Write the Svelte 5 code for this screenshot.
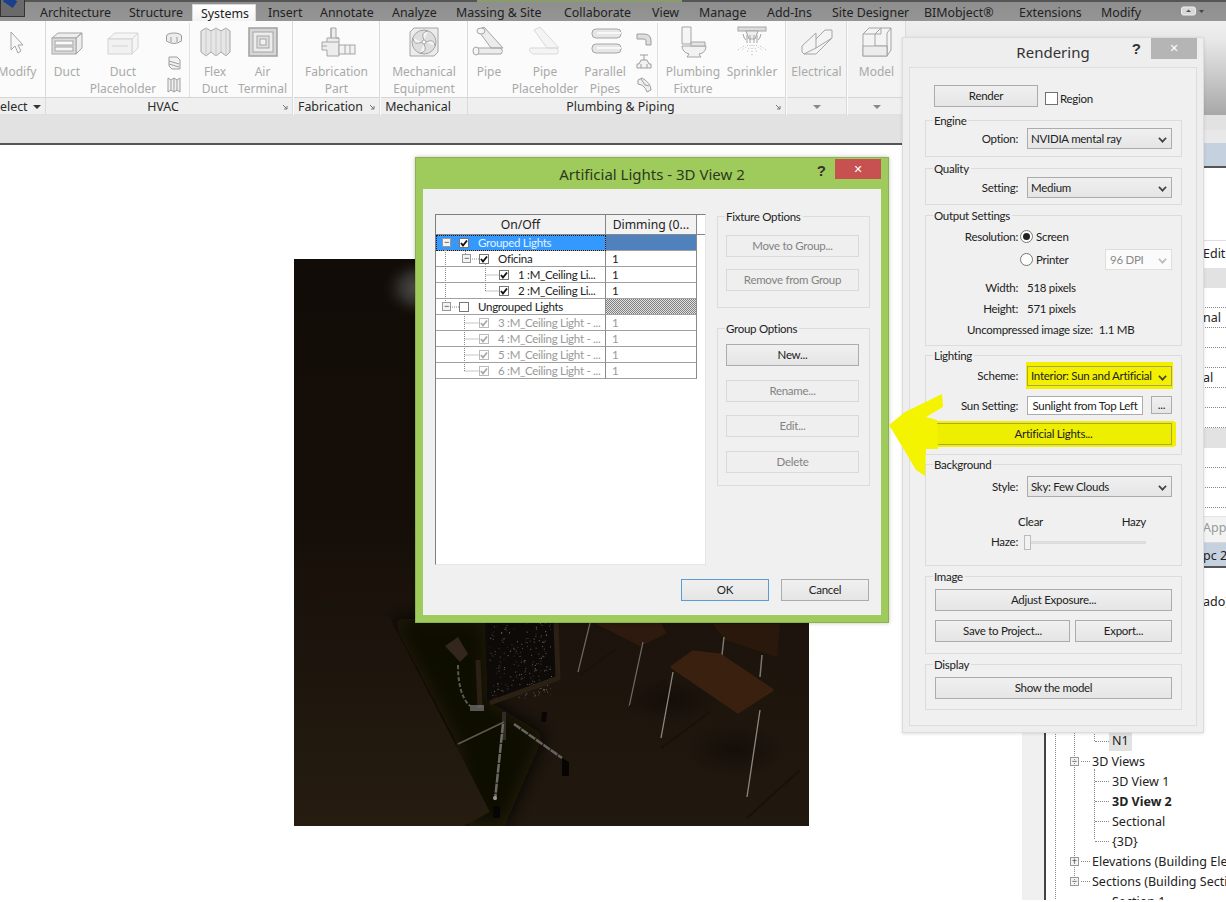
<script>
  const tabs = [
    ['Architecture', 89], ['Structure', 63], ['Systems', 76, true], ['Insert', 52], ['Annotate', 72], ['Analyze', 64],
    ['Massing & Site', 108], ['Collaborate', 88], ['View', 47], ['Manage', 68], ['Add-Ins', 65], ['Site Designer', 92],
    ['BIMobject®', 95], ['Extensions', 82], ['Modify', 72]
  ];
  const panels = [
    { title: 'elect', w: 45, drop: true, tools: [{ w: 34, l: ['Modify'], i: 'arrow' }] },
    { title: 'HVAC', w: 246, launch: true, tools: [
      { w: 42, l: ['Duct'], i: 'duct' }, { w: 70, l: ['Duct', 'Placeholder'], i: 'ductp' },
      { w: 32, small: ['fit', 'acc', 'flexs'], sep: true }, { w: 50, l: ['Flex', 'Duct'], i: 'flex' }, { w: 45, l: ['Air', 'Terminal'], i: 'air' } ] },
    { title: 'Fabrication', w: 85, launch: true, tools: [{ w: 85, l: ['Fabrication', 'Part'], i: 'fab' }] },
    { title: 'Mechanical', w: 86, tools: [{ w: 86, l: ['Mechanical', 'Equipment'], i: 'fan' }] },
    { title: 'Plumbing & Piping', w: 317, launch: true, tools: [
      { w: 42, l: ['Pipe'], i: 'pipe' }, { w: 70, l: ['Pipe', 'Placeholder'], i: 'pipep' }, { w: 50, l: ['Parallel', 'Pipes'], i: 'par' },
      { w: 28, small: ['elbow', 'valve', 'bend'], sep: true }, { w: 70, l: ['Plumbing', 'Fixture'], i: 'toilet' }, { w: 48, l: ['Sprinkler'], i: 'spr' } ] },
    { title: '', w: 59, arrow: true, tools: [{ w: 59, l: ['Electrical'], i: 'tray' }] },
    { title: '', w: 57, arrow: true, tools: [{ w: 57, l: ['Model'], i: 'cube' }] }
  ];
  const rows = [
    { lv: 0, exp: true, cb: 'on', t: 'Grouped Lights', v: '', kind: 'picked' },
    { lv: 1, exp: true, cb: 'on', t: 'Oficina', v: '1' },
    { lv: 2, cb: 'on', t: '1 :M_Ceiling Li...', v: '1' },
    { lv: 2, cb: 'on', t: '2 :M_Ceiling Li...', v: '1' },
    { lv: 0, exp: true, cb: 'off', t: 'Ungrouped Lights', v: '', kind: 'hatch' },
    { lv: 3, cb: 'dis', t: '3 :M_Ceiling Light - ...', v: '1', kind: 'dis' },
    { lv: 3, cb: 'dis', t: '4 :M_Ceiling Light - ...', v: '1', kind: 'dis' },
    { lv: 3, cb: 'dis', t: '5 :M_Ceiling Light - ...', v: '1', kind: 'dis' },
    { lv: 3, cb: 'dis', t: '6 :M_Ceiling Light - ...', v: '1', kind: 'dis' }
  ];
  const palette = [
    ['', 'pr-h26'], ['Edit', 'pr-edit'], ['', 'pr-gray'], ['', 'pr'], ['nal', 'pr'], ['', 'pr'], ['', 'pr'], ['al', 'pr'], ['', 'pr'], ['', 'pr'],
    ['', 'pr-gray'], ['', 'pr'], ['', 'pr'], ['', 'pr']
  ];
  let seed = 7;
  const rnd = () => (seed = (seed * 16807) % 2147483647) / 2147483647;
  const specks = Array.from({ length: 230 }, () => {
    const y = 623 + rnd() * 75;
    const x = 488 + (y - 623) * 0.04 + rnd() * 62;
    return { x, y, o: 0.2 + rnd() * 0.6 };
  });
</script>

{#snippet check(color)}
  <svg class="tick" viewBox="0 0 10 10"><path d="M2 5 L4 7.5 L8 2.5" fill="none" stroke={color} stroke-width="1.9" /></svg>
{/snippet}

{#snippet ribbonIcon(name)}
  <svg class="ric" viewBox="0 0 32 32" fill="#eeeeee" stroke="#a5a5a5" stroke-width="1">
    {#if name === 'arrow'}
      <path d="M10 6 V24 L14 20 L17 27 L20 25 L17 19 L22 19 Z" fill="#f8f8f8" />
    {:else if name === 'duct'}
      <path d="M1 12 L7 7 H31 L25 12 Z M25 12 L31 7 V22 L25 28 Z" /><rect x="1" y="12" width="24" height="16" fill="#dcdcdc" /><rect x="4" y="15" width="18" height="4" fill="#fafafa" /><rect x="4" y="21" width="18" height="4" fill="#f5f5f5" />
    {:else if name === 'ductp'}
      <g opacity=".45"><path d="M1 13 L8 7 H31 L25 13 Z M25 13 L31 7 V22 L25 28 Z" /><rect x="1" y="13" width="24" height="15" fill="#e5e5e5" /><path d="M5 20 H21" /></g>
    {:else if name === 'flex'}
      <path d="M2 5 L7 2 L12 5 L17 2 L22 5 L27 2 L31 5 V26 L27 30 L22 26 L17 30 L12 26 L7 30 L2 26 Z" fill="#e6e6e6" /><path d="M7 2 V30 M12 5 V26 M17 2 V30 M22 5 V26 M27 2 V30" stroke="#c8c8c8" />
    {:else if name === 'air'}
      <rect x="2" y="2" width="28" height="28" fill="#d6d6d6" stroke="#a0a0a0" stroke-width="1.5" /><rect x="6" y="6" width="20" height="20" fill="#ececec" /><rect x="10" y="10" width="12" height="12" fill="#dedede" /><rect x="13" y="13" width="6" height="6" fill="#f2f2f2" />
    {:else if name === 'fab'}
      <path d="M10 2 H15 V12 H18 V30 H6 V24 H1 V16 H6 V12 H10 Z" fill="#ededed" /><path d="M6 16 H18 M10 12 H18 M10 2 V12" /><rect x="18" y="19" width="16" height="9" fill="#f2f2f2" /><path d="M24 19 V28 M29 19 V28 M1 20 H6" />
    {:else if name === 'fan'}
      <path d="M2 6 L6 2 H30 V26 L26 30 H2 Z" fill="#ececec" /><circle cx="16" cy="16" r="12" fill="#dedede" /><circle cx="16" cy="16" r="2" fill="#fff" /><path d="M16 14 Q12 6 20 5 M18 16 Q26 12 27 20 M16 18 Q20 26 12 27 M14 16 Q6 20 5 12" fill="#f4f4f4" />
    {:else if name === 'pipe'}
      <path d="M1 22 H28 Q31 26 28 28 H4 Q-1 25 1 22 Z M5 4 L11 1 L30 22 H18 Z" fill="#ececec" /><ellipse cx="8" cy="5" rx="4" ry="3" fill="#f5f5f5" /><ellipse cx="3" cy="25" rx="3" ry="4" fill="#f5f5f5" />
    {:else if name === 'pipep'}
      <g opacity=".4"><path d="M1 22 H28 Q31 26 28 28 H4 Q-1 25 1 22 Z M5 4 L11 1 L30 22 H18 Z" fill="#ececec" /></g>
    {:else if name === 'par'}
      <rect x="3" y="3" width="29" height="9" rx="4" fill="#e6e6e6" /><rect x="3" y="18" width="29" height="9" rx="4" fill="#e6e6e6" /><path d="M8 7 H32 M8 22 H32" stroke="#f8f8f8" stroke-width="2" />
    {:else if name === 'toilet'}
      <path d="M5 1 H14 V18 H5 Z" fill="#f5f5f5" /><path d="M5 20 H29 Q29 27 22 28 L24 31 H10 L12 28 Q5 26 5 20 Z" fill="#f2f2f2" /><path d="M14 16 H28 V20 H14 Z" fill="#e4e4e4" />
    {:else if name === 'spr'}
      <rect x="2" y="1" width="28" height="4" fill="#dcdcdc" /><path d="M10 5 H22 L19 13 H13 Z" fill="#eee" /><path d="M11 9 V17 M14 9 V17 M18 9 V17 M21 9 V17 M7 8 Q8 13 10 14 M25 8 Q24 13 22 14" /><g stroke="#b5b5b5" stroke-dasharray="1 2"><path d="M12 19 L5 25 M14 19 L11 27 M18 19 L21 27 M20 19 L27 25 M8 20 L2 24 M24 20 L30 24 M16 19 V29" /></g>
    {:else if name === 'tray'}
      <path d="M1 20 L15 7 V13 L24 4 H31 V12 L15 28 H3 L1 26 Z" fill="#f4f4f4" /><path d="M15 13 V22 L31 12 M15 22 L3 28" fill="none" />
    {:else if name === 'cube'}
      <path d="M2 8 L8 2 H30 V24 L26 30 H2 Z" fill="#f4f4f4" /><path d="M2 8 H14 L20 2 M14 8 V20 H26 V30 M26 30 V7 L30 2 M20 2 V8 H14" fill="none" /><rect x="2" y="20" width="24" height="10" fill="#ececec" />
    {/if}
  </svg>
{/snippet}

{#snippet smallIcon(name)}
  <svg class="ris" viewBox="0 0 16 16" fill="#ececec" stroke="#9d9d9d" stroke-width="1">
    {#if name === 'fit'}
      <ellipse cx="8" cy="5" rx="7.5" ry="3" /><path d="M.5 5 V10 Q8 15 15.5 10 V5" /><path d="M5 6 V11 M11 6 V11" />
    {:else if name === 'acc'}
      <path d="M3 3 H11 L14 6 V15 H6 L3 12 Z" fill="#f2f2f2" /><path d="M3 7 L13 10 M3 10 L13 13" />
    {:else if name === 'flexs'}
      <path d="M2 1 L5 3 L8 1 L11 3 L14 1 V15 L11 13 L8 15 L5 13 L2 15 Z" fill="#f2f2f2" /><path d="M5 3 V13 M8 1 V15 M11 3 V13" />
    {:else if name === 'elbow'}
      <path d="M1 3 H8 Q15 3 15 10 V14 H10 V10 Q10 8 8 8 H1 Z" fill="#dedede" />
    {:else if name === 'valve'}
      <path d="M4 1 H12 M8 1 V6 M5 6 H11 L13 10 H15 V14 H1 V10 H3 Z" fill="#f2f2f2" /><path d="M5 10 V14 M11 10 V14" />
    {:else if name === 'bend'}
      <path d="M2 3 L6 1 Q15 6 15 13 L11 15 Q9 8 2 7 Z" fill="#f0f0f0" /><path d="M5 2 L9 8 L13 9" />
    {/if}
  </svg>
{/snippet}

<div class="desk">
  <!-- Revit ribbon -->
  <header class="top">
    <div class="tabbar">
      <i class="qat"></i>
      <div class="appbtn"><span class="applogo"></span></div>
      {#each tabs as t}
        <div class="tab" class:active={t[2]} style="width:{t[1]}px"><span>{t[0]}</span></div>
      {/each}
      <svg class="mini" viewBox="0 0 24 10"><rect x=".5" y="1" width="14" height="8" rx="2" fill="#d8d8d8" stroke="#eee" /><path d="M5 6 L7.5 3.5 L10 6 Z" fill="#555" /><path d="M18 4 H23 L20.5 7 Z" fill="#444" /></svg>
    </div>
    <div class="ribbon">
      {#each panels as p}
        <section class="panel" style="width:{p.w}px">
          <div class="tools">
            {#each p.tools as t}
              {#if t.small}
                <div class="smalls" class:sep={t.sep} style="width:{t.w}px">
                  {#each t.small as s}{@render smallIcon(s)}{/each}
                </div>
              {:else}
                <div class="tool" style="width:{t.w}px">
                  <div class="icbox">{@render ribbonIcon(t.i)}</div>
                  {#each t.l as line}<span class="tl">{line}</span>{/each}
                </div>
              {/if}
            {/each}
          </div>
          <div class="ptitle" class:left={p.drop} class:named={p.title && !p.drop}>
            {#if p.title}<span>{p.title}</span>{/if}
            {#if p.drop}<i class="dtri dark"></i>{/if}
            {#if p.arrow}<i class="dtri"></i>{/if}
            {#if p.launch}<svg class="launch" viewBox="0 0 7 7"><path d="M1 1 L5 5 M5 2 V5 H2" fill="none" stroke="#777" /></svg>{/if}
          </div>
        </section>
      {/each}
      <div class="ribbon-rest"></div>
    </div>
    <div class="subbar"></div>
  </header>

  <!-- Rendered view -->
  <svg class="scene" viewBox="294 259 515 567" aria-hidden="true">
    <defs>
      <linearGradient id="bg" x1="0" y1="0" x2="0" y2="1">
        <stop offset="0" stop-color="#120c08" /><stop offset=".45" stop-color="#150e08" /><stop offset=".65" stop-color="#1c140c" /><stop offset="1" stop-color="#21190f" />
      </linearGradient>
      <linearGradient id="table" x1="0" y1="0" x2="0" y2="1">
        <stop offset="0" stop-color="#19120b" /><stop offset="1" stop-color="#261c10" />
      </linearGradient>
      <radialGradient id="glare"><stop offset="0" stop-color="#5e5d59" /><stop offset=".55" stop-color="#363431" stop-opacity=".8" /><stop offset="1" stop-color="#1a1410" stop-opacity="0" /></radialGradient>
      <radialGradient id="shade"><stop offset="0" stop-color="#0b0705" stop-opacity=".55" /><stop offset="1" stop-color="#0b0705" stop-opacity="0" /></radialGradient>
      <filter id="soft" x="-30%" y="-30%" width="160%" height="160%"><feGaussianBlur stdDeviation="9" /></filter>
    </defs>
    <rect x="294" y="259" width="515" height="567" fill="url(#bg)" />
    <ellipse cx="422" cy="288" rx="40" ry="30" fill="url(#glare)" />
    <path d="M390 618 L485 620 L488 700 L545 735 L525 780 L505 826 L470 826 L455 740 Z" fill="#0a0705" filter="url(#soft)" />
    <path d="M294 590 L390 618 L490 812 L463 826 H294 Z" fill="url(#table)" />
    <ellipse cx="670" cy="700" rx="50" ry="24" fill="url(#shade)" />
    <ellipse cx="735" cy="750" rx="50" ry="26" fill="url(#shade)" />
    <path d="M487 623 H555 L556 678 Q520 695 487 702 Z" fill="#0d0a08" />
    {#each specks as s}
      <rect x={s.x} y={s.y} width="1" height="1" fill="#8b8b88" opacity={s.o} />
    {/each}
    <path d="M478 660 L480 708 M556 623 L558 678 L490 703" stroke="#2a2013" stroke-width="5" fill="none" />
    <path d="M445 646 L458 637 L468 654 L460 662 Z" fill="#33261a" />
    <path d="M458 665 Q458 695 470 706" stroke="#5b5954" stroke-width="2" fill="none" stroke-dasharray="4 2" />
    <rect x="470" y="705" width="14" height="6" fill="#888" opacity=".6" />
    <path d="M504 712 V740" stroke="#2f2b26" stroke-width="4" />
    <path d="M504 722 L458 744" stroke="#5d5a55" stroke-width="1.5" />
    <path d="M514 724 L562 758" stroke="#66635e" stroke-width="2.5" stroke-dasharray="8 1" />
    <path d="M503 724 L495 800" stroke="#6c6a64" stroke-width="2.5" stroke-dasharray="9 1" />
    <circle cx="495" cy="798" r="2" fill="#999" />
    <path d="M562 758 V776 H569 V762 Z" fill="#070504" />
    <path d="M493 806 H500 V818 H493 Z" fill="#080605" />
    <path d="M542 712 H547 L546 722 H541 Z" fill="#090605" />
    <path d="M597 623 H660 L665 633 L640 645 Z" fill="#2e1a0e" stroke="#2e1a0e" stroke-width="2" stroke-linejoin="round" />
    <path d="M590 623 L578 672 M643 642 L629 707" stroke="#6c6962" stroke-width="1.2" fill="none" />
    <path d="M629 707 L665 680 M580 675 L615 650" stroke="#1a110b" stroke-width="2" />
    <path d="M713 624 H780 L777 657 L725 640 Z" fill="#2b180d" />
    <path d="M724 637 L722 655 M762 655 L760 677" stroke="#7a7770" stroke-width="1.5" />
    <path d="M672 667 L693 652 L720 655 L772 690 L738 712 Z" fill="#39200f" stroke="#39200f" stroke-width="3" stroke-linejoin="round" />
    <path d="M673 672 L661 738 M760 710 L747 797" stroke="#8a8780" stroke-width="1.3" />
    <path d="M661 748 L710 712 M747 818 L800 770" stroke="#19110b" stroke-width="2" />
  </svg>

  <!-- Properties palette and project browser behind the Rendering dialog -->
  <aside class="side">
    <div class="side-top"></div>
    <div class="side-head"></div>
    {#each palette as p}
      <div class={p[1]}><span>{p[0]}</span></div>
    {/each}
    <div class="pr-app"><span>App</span></div>
    <div class="pr-blue"><span>pc 2</span></div>
    <div class="browser">
      <div class="gutter"></div>
      <div class="tree">
        <div class="b-row ado"><span>ado)</span></div>
        <div class="b-list">
          <i class="vdot v1"></i><i class="vdot v2"></i><i class="vdot v3"></i><i class="vdot v4"></i>
          <div class="b-row l2"><i class="hd"></i><span class="cur">N1</span></div>
          <div class="b-row l1"><b class="expander">−</b><i class="hd sm"></i><span>3D Views</span></div>
          <div class="b-row l2"><i class="hd"></i><span>3D View 1</span></div>
          <div class="b-row l2"><i class="hd"></i><strong>3D View 2</strong></div>
          <div class="b-row l2"><i class="hd"></i><span>Sectional</span></div>
          <div class="b-row l2"><i class="hd"></i><span>{'{3D}'}</span></div>
          <div class="b-row l1"><b class="expander">+</b><i class="hd sm"></i><span>Elevations (Building Elevation)</span></div>
          <div class="b-row l1"><b class="expander">−</b><i class="hd sm"></i><span>Sections (Building Section)</span></div>
          <div class="b-row l2"><i class="hd"></i><span>Section 1</span></div>
        </div>
      </div>
    </div>
  </aside>

  <!-- Artificial Lights dialog -->
  <div class="win lights">
    <div class="caption">
      <span class="ctitle">Artificial Lights - 3D View 2</span>
      <span class="help">?</span>
      <span class="close red">✕</span>
    </div>
    <div class="client">
      <div class="lmain">
        <div class="list">
          <div class="lrow lhead"><div class="c1 hc">On/Off</div><div class="c2 hc">Dimming (0...</div><div class="c3"></div></div>
          {#each rows as r}
            <div class="lrow {r.kind ?? ''}">
              <div class="c1 lv{r.lv}">
                {#if r.exp}<b class="exp">−</b>{/if}
                <span class="cb {r.cb}">{#if r.cb === 'on'}{@render check('#111')}{:else if r.cb === 'dis'}{@render check('#a9a9a9')}{/if}</span>
                <span class="lt">{r.t}</span>
              </div>
              <div class="c2">{r.v}</div>
            </div>
          {/each}
          <svg class="treelines" viewBox="0 0 271 351" aria-hidden="true">
            <g stroke="#8a8a8a" stroke-dasharray="1 1" fill="none">
              <path d="M10.5 34 V88 M15 29 H24 M15 93 H24" />
              <path d="M30.5 37 V40 M35 45 H44" />
              <path d="M50.5 50 V77 M50.5 61 H64 M50.5 77 H64" />
              <path d="M29.5 100 V157 M29.5 109 H44 M29.5 125 H44 M29.5 141 H44 M29.5 157 H44" />
            </g>
          </svg>
        </div>
        <div class="opts">
          <div class="grp gf">
            <span class="leg">Fixture Options</span>
            <button class="btn dis">Move to Group...</button>
            <button class="btn dis">Remove from Group</button>
          </div>
          <div class="grp gg">
            <span class="leg">Group Options</span>
            <button class="btn">New...</button>
            <button class="btn dis">Rename...</button>
            <button class="btn dis">Edit...</button>
            <button class="btn dis">Delete</button>
          </div>
        </div>
      </div>
      <div class="lfoot">
        <button class="btn ok">OK</button>
        <button class="btn ok cancel">Cancel</button>
      </div>
    </div>
  </div>

  <!-- Rendering dialog -->
  <div class="win rendering">
    <div class="caption">
      <span class="ctitle">Rendering</span>
      <span class="help">?</span>
      <span class="close gray">✕</span>
    </div>
    <div class="rclient">
      <div class="rtop">
        <button class="btn render">Render</button>
        <span class="cb big"></span><span class="reg">Region</span>
      </div>

      <div class="g g-engine">
        <span class="leg">Engine</span>
        <div class="f"><label>Option:</label><div class="sel">NVIDIA mental ray<i class="chev"></i></div></div>
      </div>
      <div class="g g-quality">
        <span class="leg">Quality</span>
        <div class="f"><label>Setting:</label><div class="sel">Medium<i class="chev"></i></div></div>
      </div>
      <div class="g g-output">
        <span class="leg">Output Settings</span>
        <div class="f"><label>Resolution:</label><div class="rad"><i class="radio on"></i>Screen</div></div>
        <div class="f"><label></label><div class="rad"><i class="radio"></i>Printer<div class="sel dpi">96 DPI<i class="chev pale"></i></div></div></div>
        <div class="f gapf"><label>Width:</label><span>518 pixels</span></div>
        <div class="f"><label>Height:</label><span>571 pixels</span></div>
        <div class="unc"><span>Uncompressed image size:</span><span>1.1 MB</span></div>
      </div>
      <div class="g g-light">
        <span class="leg">Lighting</span>
        <div class="f h20"><label>Scheme:</label><div class="sel hl">Interior: Sun and Artificial<i class="chev"></i></div></div>
        <div class="f sun"><label>Sun Setting:</label><div class="sunv"><span class="sunbox">Sunlight from Top Left</span><button class="btn dots">...</button></div></div>
        <button class="btn wide hlb">Artificial Lights...</button>
      </div>
      <div class="g g-back">
        <span class="leg">Background</span>
        <div class="f"><label>Style:</label><div class="sel">Sky: Few Clouds<i class="chev"></i></div></div>
        <div class="f cl"><label></label><div class="clhz"><span>Clear</span><span>Hazy</span></div></div>
        <div class="f hz"><label>Haze:</label><div class="slider"><i class="thumb"></i></div></div>
      </div>
      <div class="g g-image">
        <span class="leg">Image</span>
        <button class="btn wide">Adjust Exposure...</button>
        <div class="two"><button class="btn">Save to Project...</button><button class="btn">Export...</button></div>
      </div>
      <div class="g g-display">
        <span class="leg">Display</span>
        <button class="btn wide">Show the model</button>
      </div>
    </div>
  </div>

  <svg class="marker" viewBox="885 388 60 95" aria-hidden="true">
    <path d="M889 425 L905 412 L942 394 L943 407 L926 417 L937 420 L938 449 L926 449 L925 476 L916 470 L906 453 Z" fill="#f4f400" />
  </svg>
</div>

<style>
  :global(body) { margin: 0; background: #fff; }
  .desk { position: relative; width: 1226px; height: 902px; overflow: hidden; background: #fff; font: 11.5px/1.2 Lato, "Liberation Sans", sans-serif; letter-spacing: -.28px; color: #222; }
  button { font: inherit; letter-spacing: inherit; color: inherit; padding: 0; }

  .top { display: flex; flex-direction: column; height: 145px; font-family: "Noto Sans", sans-serif; letter-spacing: 0; }
  .tabbar { position: relative; display: flex; align-items: stretch; height: 21px; background: linear-gradient(#555 0 2px, #8e8e8e 2px, #959595); font-size: 12.4px; }
  .qat { position: absolute; left: 477px; top: 0; width: 205px; height: 2px; background: #8b9c6b; }
  .appbtn { width: 25px; height: 17px; margin-right: 15px; background: #6a6a6a; border: 1px solid #333; border-top: 0; box-sizing: border-box; overflow: hidden; }
  .applogo { display: block; width: 12px; height: 8px; background: #1c3f8c; transform: rotate(35deg) translate(1px, -4px); }
  .tab { padding-top: 6px; box-sizing: border-box; white-space: nowrap; color: #222; }
  .tab.active { background: linear-gradient(#fff, #f3f3f3); border: 1px solid #d8d8d8; border-bottom: 0; height: 17px; margin-top: 4px; padding: 2px 0 0 8px; width: 64px !important; margin-right: 12px; }
  .mini { width: 24px; height: 10px; margin: 6px 0 0 8px; }
  .ribbon { display: flex; height: 94px; background: #fbfbfb; }
  .panel { flex: none; display: flex; flex-direction: column; margin-right: 1px; box-shadow: 1px 0 0 #dadada; }
  .panel:nth-child(2), .panel:nth-child(3) { margin-right: 2px; }
  .panel:nth-child(5) { margin-right: 2px; }
  .panel:nth-child(6) { margin-right: 2px; background: #f3f3f3; }
  .panel:nth-child(7) { background: #f3f3f3; }
  .tools { display: flex; height: 76px; }
  .tool { flex: none; display: flex; flex-direction: column; align-items: center; padding-top: 5px; box-sizing: border-box; color: #a9a9a9; white-space: nowrap; font-size: 12px; line-height: 17px; }
  .icbox { height: 34px; margin-bottom: 3px; display: flex; justify-content: center; }
  .tl { display: block; }
  .ric { width: 32px; height: 32px; overflow: visible; }
  .smalls { flex: none; display: flex; flex-direction: column; align-items: center; gap: 7px; padding-top: 8px; box-sizing: border-box; height: 74px; border-right: 1px solid #e0e0e0; margin-top: 2px; }
  .ris { width: 16px; height: 16px; }
  .ptitle { position: relative; height: 18px; padding-top: 2px; background: #efefef; border-top: 1px solid #d5d5d5; border-bottom: 1px solid #e0e0e0; box-sizing: border-box; text-align: center; font-size: 12.4px; line-height: 16px; color: #2b2b2b; display: flex; justify-content: center; align-items: center; white-space: nowrap; }
  .ptitle.named { padding-right: 12px; }
  .ptitle.left { justify-content: flex-start; gap: 5px; }
  .dtri { width: 0; height: 0; border: 4px solid transparent; border-top: 4px solid #888; border-bottom: 0; }
  .dtri.dark { border-top-color: #333; }
  .launch { position: absolute; right: 3px; top: 6px; width: 7px; height: 7px; }
  .ribbon-rest { flex: 1; background: linear-gradient(#efefef 0, #e8e8e8 20%, #a8a8a8 100%); }
  .subbar { height: 28px; background: #e2e2e2; border-bottom: 2px solid #555; }

  .scene { position: absolute; left: 294px; top: 259px; width: 515px; height: 567px; }

  .side { position: absolute; left: 1022px; top: 130px; width: 204px; display: flex; flex-direction: column; font-family: "Noto Sans", sans-serif; letter-spacing: 0; }
  .side span { white-space: nowrap; }
  .side-top { height: 13px; background: #e8e8e8; }
  .side-head { height: 25px; background: #c5d1df; border-bottom: 2px solid #555; box-sizing: border-box; }
  .side > div[class^="pr"] { padding-left: 181px; font-size: 12.5px; box-sizing: border-box; }
  .pr-h26 { height: 73px; border-bottom: 1px solid #ddd; background: #fff; }
  .pr-edit { height: 27px; line-height: 26px; background: #fff; }
  .pr-gray { height: 20px; background: #e2e2e2; }
  .pr { height: 20px; line-height: 20px; border-bottom: 1px dotted #888; }
  .side > .pr-app { height: 27px; margin-top: 8px; line-height: 21px; color: #999; background: #f3f3f3; border-top: 1px solid #e4e4e4; border-bottom: 1px solid #d8d8d8; }
  .side > .pr-blue { height: 25px; line-height: 26px; background: #c5d1df; border-bottom: 2px solid #555; }
  .browser { display: flex; height: 332px; }
  .gutter { width: 22px; background: #f0f0f0; border-right: 2px solid #444; flex: none; }
  .tree { flex: 1; background: #fff; font-size: 12.5px; position: relative; overflow: hidden; }
  .b-row { display: flex; align-items: center; height: 20px; white-space: nowrap; }
  .b-row.ado { padding-left: 157px; margin-top: 23px; height: 20px; }
  .b-list { position: absolute; left: 0; top: 163px; width: 180px; }
  .b-row.l1 { padding-left: 24px; }
  .b-row.l2 { padding-left: 49px; }
  .b-row strong { font-weight: 700; }
  .cur { background: #e2e2e2; padding: 0 3px; margin-left: -3px; line-height: 20px; }
  .hd { width: 14px; margin-right: 3px; border-top: 1px dotted #888; flex: none; }
  .hd.sm { width: 9px; margin-left: 2px; margin-right: 2px; }
  .expander { display: flex; align-items: center; justify-content: center; width: 9px; height: 9px; border: 1px solid #999; box-sizing: border-box; font: 400 9px/1 "Liberation Sans", sans-serif; color: #333; background: #f4f4f4; flex: none; }
  .vdot { position: absolute; border-left: 1px dotted #888; }
  .vdot.v1 { left: 9px; top: -20px; height: 220px; }
  .vdot.v2 { left: 28px; top: 0; height: 155px; }
  .vdot.v3 { left: 48px; top: 38px; height: 70px; }
  .vdot.v4 { left: 48px; top: -20px; height: 30px; }

  .win { position: absolute; box-sizing: border-box; }
  .caption { position: relative; display: flex; justify-content: center; color: #333; font-family: "Noto Sans", sans-serif; letter-spacing: 0; }
  .ctitle { font-size: 15px; line-height: 20px; }
  .help { position: absolute; font: 700 15px/1 "Liberation Sans", sans-serif; color: #333; }
  .close { position: absolute; display: flex; align-items: center; justify-content: center; color: #fff; font: 700 11px/1 "DejaVu Sans", sans-serif; }
  .close.red { background: #c75050; width: 46px; height: 20px; right: 0; top: 1px; }
  .close.gray { background: #b5b5b5; width: 46px; height: 21px; right: 0; top: 0; }

  .lights { left: 415px; top: 157px; width: 474px; height: 466px; background: #9fcb5c; border: 1px solid #8db14f; padding: 0 7px 7px; box-shadow: 0 0 4px rgba(0, 0, 0, .25); display: flex; flex-direction: column; }
  .lights .caption { height: 31px; padding-top: 6px; box-sizing: border-box; }
  .lights .ctitle { color: #2c3a1a; }
  .lights .help { right: 55px; top: 5px; }
  .client { flex: 1; background: #f0f0f0; padding: 25px 11px 0 12px; box-sizing: border-box; }
  .lmain { display: flex; gap: 11px; }
  .list { position: relative; width: 271px; height: 351px; box-sizing: border-box; background: #fff; border: 1px solid #e6e6e6; border-top-color: #7f7f7f; border-left-color: #7f7f7f; }
  .lrow { display: flex; height: 16px; width: 261px; line-height: 15px; }
  .lhead { height: 20px; width: 269px; font: 12.2px/19px "Noto Sans", sans-serif; letter-spacing: 0; background: #f2f2f2; border-bottom: 1px solid #888; box-sizing: border-box; }
  .lhead .c3 { flex: 1; background: #fff; }
  .c1 { position: relative; width: 170px; box-sizing: border-box; display: flex; align-items: center; border-right: 1px solid #888; border-bottom: 1px solid #a0a0a0; white-space: nowrap; }
  .c2 { width: 91px; padding-left: 6px; box-sizing: border-box; border-right: 1px solid #888; border-bottom: 1px solid #a0a0a0; }
  .hc { justify-content: center; text-align: center; padding: 0; border-bottom: 0; }
  .lv0 { padding-left: 23px; }
  .lv1 { padding-left: 43px; }
  .lv2 { padding-left: 63px; }
  .lv3 { padding-left: 43px; }
  .exp { position: absolute; display: flex; align-items: center; justify-content: center; width: 9px; height: 9px; top: 3px; box-sizing: border-box; border: 1px solid #999; background: #f3f3f3; color: #333; font: 400 9px/1 "Liberation Sans", sans-serif; }
  .lv0 .exp { left: 6px; }
  .lv1 .exp { left: 26px; }
  .cb { flex: none; width: 10px; height: 10px; border: 1px solid #777; background: #fff; box-sizing: border-box; display: block; position: relative; margin-right: 9px; }
  .cb.dis { border-color: #bbb; }
  .tick { position: absolute; left: -1px; top: -1px; width: 10px; height: 10px; overflow: visible; }
  .lrow.picked .c1 { background: #3399ff; color: #e4f1ff; outline: 1px dotted #1a1a1a; outline-offset: -1px; }
  .lrow.picked .c2 { background: #4f81bd; }
  .lrow.hatch .c2 { background: repeating-conic-gradient(#808080 0 25%, #e0e0e0 0 50%) 0 0 / 2px 2px; }
  .lrow.dis { color: #999; }
  .treelines { position: absolute; left: -1px; top: -1px; width: 271px; height: 351px; pointer-events: none; }

  .opts { width: 155px; margin-top: 2px; display: flex; flex-direction: column; gap: 20px; }
  .grp { position: relative; border: 1px solid #dcdcdc; box-sizing: border-box; padding: 18px 10px 0 8px; display: flex; flex-direction: column; }
  .gf { height: 92px; gap: 12px; }
  .gg { height: 158px; padding-top: 15px; gap: 13.6px; }
  .leg { position: absolute; left: 7px; top: -7px; padding: 0 2px 0 1px; background: #f0f0f0; line-height: 14px; color: #222; }
  .btn { display: block; box-sizing: border-box; height: 22px; border: 1px solid #acacac; background: linear-gradient(#f0f0f0, #e5e5e5); text-align: center; }
  .btn.dis { background: #efefef; border-color: #d9d9d9; color: #838383; }
  .lfoot { display: flex; justify-content: flex-end; gap: 12px; margin: 14px 1px 0 0; }
  .btn.ok { width: 88px; border-color: #5a9bd8; }
  .btn.cancel { border-color: #acacac; }

  .rendering { left: 902px; top: 37px; width: 302px; height: 696px; background: #eeeeee; border: 1px solid #dcdcdc; padding: 0 6px 6px; box-shadow: 0 1px 3px rgba(0, 0, 0, .12); display: flex; flex-direction: column; }
  .rendering .caption { height: 29px; padding-top: 4px; box-sizing: border-box; }
  .rendering .help { right: 56px; top: 3px; }
  .rclient { flex: 1; background: #f0f0f0; border: 1px solid #dddddd; box-sizing: border-box; padding: 17px 14px 0 15px; display: flex; flex-direction: column; }
  .rtop { display: flex; align-items: flex-start; height: 35px; padding-left: 9px; }
  .render { width: 104px; height: 22px; margin-right: 7px; }
  .cb.big { width: 13px; height: 13px; margin: 7px 2px 0 0; border-color: #707070; }
  .reg { margin-top: 7px; }
  .g { position: relative; border: 1px solid #dcdcdc; box-sizing: border-box; display: flex; flex-direction: column; }
  .g-engine { height: 37px; padding-top: 7px; }
  .g-quality { height: 37px; padding-top: 8px; margin-top: 11px; }
  .g-output { height: 131px; padding-top: 10px; margin-top: 10px; }
  .g-light { height: 100px; padding-top: 10px; margin-top: 9px; }
  .g-back { height: 102px; padding-top: 11px; margin-top: 9px; }
  .g-image { height: 78px; padding-top: 12px; margin-top: 10px; }
  .g-display { height: 46px; padding-top: 12px; margin-top: 10px; }
  .f { display: grid; grid-template-columns: 92px 145px; column-gap: 9px; align-items: center; min-height: 21px; }
  .f label { text-align: right; }
  .g-output .f + .f { margin-top: 1px; }
  .g-output .f.gapf { margin-top: 7px; }
  .g-output .f.gapf + .f { margin-top: 0; }
  .sel { position: relative; height: 21px; line-height: 20px; box-sizing: border-box; padding-left: 3px; border: 1px solid #acacac; background: linear-gradient(#f0f0f0, #e5e5e5); white-space: nowrap; overflow: hidden; }
  .chev { position: absolute; right: 5px; top: 6px; width: 5px; height: 5px; border: solid #444; border-width: 0 2px 2px 0; transform: rotate(45deg) scale(.85); }
  .chev.pale { border-color: #bbb; }
  .rad { display: flex; align-items: center; margin-left: -7px; padding-top: 1px; }
  .radio { width: 13px; height: 13px; border: 1px solid #777; border-radius: 50%; background: #fff; box-sizing: border-box; margin-right: 3px; position: relative; flex: none; }
  .radio.on::after { content: ""; position: absolute; inset: 2px; background: #222; border-radius: 50%; }
  .sel.dpi { margin-left: auto; width: 67px; background: #fbfbfb; border-color: #dedede; color: #8a8a8a; padding-left: 4px; }
  .unc { display: flex; gap: 6px; padding-left: 41px; height: 21px; align-items: center; }
  .h20, .h20 .sel { min-height: 20px; height: 20px; }
  .sel.hl { background: #f2ef00; border-color: #a9a74a; box-shadow: 0 0 0 1px #f2ef00, 0 -3px 0 1px #f2ef00, 0 2px 0 1px #f2ef00; line-height: 18px; overflow: visible; }
  .sun { margin-top: 10px; min-height: 19px; }
  .sunv { display: flex; justify-content: space-between; }
  .sunbox { width: 116px; height: 19px; line-height: 18px; background: #fff; border: 1px solid #acacac; box-sizing: border-box; text-align: center; white-space: nowrap; }
  .dots { width: 21px; height: 18px; line-height: 14px; }
  .wide { width: 237px; height: 22px; margin: 0 9px; flex: none; }
  .g-light .wide { margin-top: 8px; }
  .hlb { background: #eeee00; border-color: #a9a742; box-shadow: 0 0 0 2px #f2f000, 3px 0 0 1px #f2f000; }
  .cl { margin-top: 16px; min-height: 18px; }
  .clhz { display: flex; justify-content: space-between; margin-left: -9px; width: 128px; }
  .hz { min-height: 18px; margin-top: 2px; }
  .slider { position: relative; height: 3px; width: 116px; margin-left: 3px; background: #e2e2e2; border: 1px solid #dadada; box-sizing: border-box; }
  .thumb { position: absolute; left: -7px; top: -7px; width: 7px; height: 15px; box-sizing: border-box; background: #f2f2f2; border: 1px solid #bcbcbc; }
  .two { display: flex; gap: 5px; margin: 9px 9px 0; }
  .two .btn:first-child { width: 135px; }
  .two .btn:last-child { width: 97px; }
  .marker { position: absolute; left: 885px; top: 388px; width: 60px; height: 95px; }
</style>
